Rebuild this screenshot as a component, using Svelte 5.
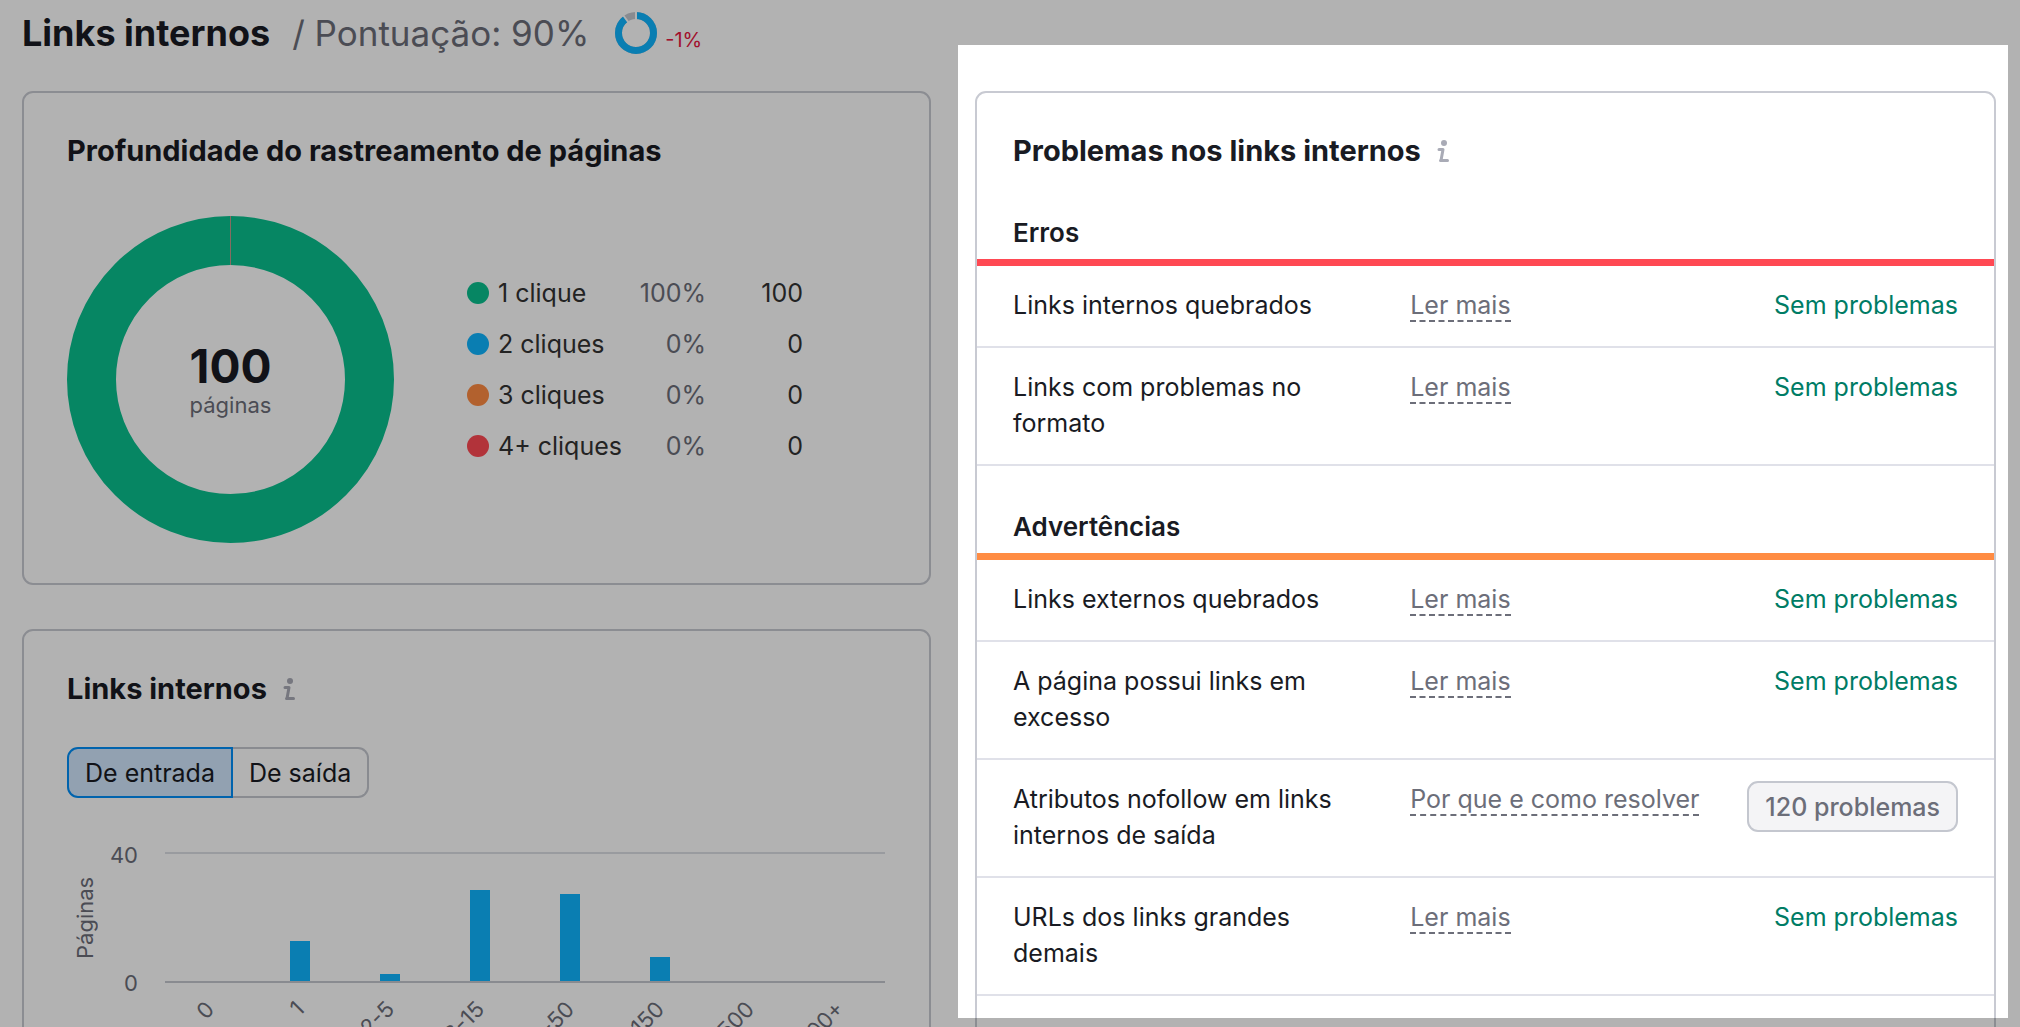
<script>
  let direction = "in";

  const legend = [
    { label: "1 clique", percent: "100%", pages: 100, type: "green" },
    { label: "2 cliques", percent: "0%", pages: 0, type: "blue" },
    { label: "3 cliques", percent: "0%", pages: 0, type: "orange" },
    { label: "4+ cliques", percent: "0%", pages: 0, type: "red" },
  ];

  // bar heights in px, the plot is 127px high
  const bars = [
    { label: "0", height: 0 },
    { label: "1", height: 40 },
    { label: "2-5", height: 7 },
    { label: "6-15", height: 91 },
    { label: "16-50", height: 87 },
    { label: "51-150", height: 24 },
    { label: "151-500", height: 0 },
    { label: "500+", height: 0 },
  ];

  const sections = [
    {
      title: "Erros",
      type: "errors",
      rows: [
        { name: "Links internos quebrados", link: "Ler mais", count: 0 },
        { name: "Links com problemas no formato", link: "Ler mais", count: 0 },
      ],
    },
    {
      title: "Advertências",
      type: "warnings",
      rows: [
        { name: "Links externos quebrados", link: "Ler mais", count: 0 },
        { name: "A página possui links em excesso", link: "Ler mais", count: 0 },
        {
          name: "Atributos nofollow em links internos de saída",
          link: "Por que e como resolver",
          count: 120,
        },
        { name: "URLs dos links grandes demais", link: "Ler mais", count: 0 },
      ],
    },
  ];
</script>

{#snippet info()}
  <svg class="info" width="12" height="22" viewBox="0 0 12 22" aria-hidden="true">
    <circle cx="7" cy="3" r="3" />
    <path d="M2 9.5h4L4 20.5M3.5 20.5h7" />
  </svg>
{/snippet}

<div class="page">
  <header>
    <h1>Links internos</h1>
    <span class="score">/ Pontuação: 90%</span>
    <svg class="ring" width="42" height="42" viewBox="0 0 42 42" aria-hidden="true">
      <circle class="ring-rest" cx="21" cy="21" r="17.5" pathLength="100" />
      <circle class="ring-value" cx="21" cy="21" r="17.5" pathLength="100" />
      <path class="ring-gap" d="M21 0v8M8 3l5.5 7.5" />
    </svg>
    <span class="diff">-1%</span>
  </header>

  <main>
    <div class="left">
      <section class="card depth">
        <h2>Profundidade do rastreamento de páginas</h2>
        <div class="depth-body">
          <div class="donut">
            <svg viewBox="0 0 327 327" aria-hidden="true">
              <circle cx="163.5" cy="163.5" r="139" />
              <path d="M163.5 0v49" />
            </svg>
            <div class="total">
              <strong>100</strong>
              <span>páginas</span>
            </div>
          </div>
          <ul>
            {#each legend as item}
              <li>
                <i class={item.type}></i>
                <span>{item.label}</span>
                <span class="percent">{item.percent}</span>
                <span class="pages">{item.pages}</span>
              </li>
            {/each}
          </ul>
        </div>
      </section>

      <section class="card links">
        <h2>Links internos {@render info()}</h2>
        <div class="switch">
          <button class:active={direction === "in"} on:click={() => (direction = "in")}>
            De entrada
          </button>
          <button class:active={direction === "out"} on:click={() => (direction = "out")}>
            De saída
          </button>
        </div>
        <div class="chart">
          <span class="axis-title">Páginas</span>
          <div class="ticks">
            <span>40</span>
            <span>0</span>
          </div>
          <div class="plot">
            <div class="bars">
              {#each bars as bar}
                <div class="bar" style="height: {bar.height}px"></div>
              {/each}
            </div>
            <div class="labels">
              {#each bars as bar}
                <span>{bar.label}</span>
              {/each}
            </div>
          </div>
        </div>
      </section>
    </div>

    <div class="right">
      <section class="card problems">
        <h2>Problemas nos links internos {@render info()}</h2>
        {#each sections as section}
          <h3 class={section.type}>{section.title}</h3>
          <table>
            <tbody>
              {#each section.rows as row}
                <tr>
                  <td class="name">{row.name}</td>
                  <td><a href="#details">{row.link}</a></td>
                  <td class="result">
                    {#if row.count}
                      <button>{row.count} problemas</button>
                    {:else}
                      Sem problemas
                    {/if}
                  </td>
                </tr>
              {/each}
            </tbody>
          </table>
        {/each}
      </section>
      <div class="spotlight"></div>
    </div>
  </main>
</div>

<style>
  :global(body) {
    margin: 0;
    background: #fff;
  }
  .page {
    box-sizing: border-box;
    display: flex;
    flex-direction: column;
    height: 100vh;
    padding: 0 24px 0 22px;
    overflow: hidden;
    font-family: Inter, "Liberation Sans", sans-serif;
    font-size: 25px;
    line-height: 36px;
    color: #191b23;
  }
  header {
    display: flex;
    align-items: center;
    flex-shrink: 0;
    height: 65px;
    margin-bottom: 26px;
  }
  h1 {
    margin: 0 22px 0 0;
    font-size: 36px;
    font-weight: 700;
    line-height: 44px;
  }
  .score {
    margin-right: 26px;
    font-size: 35px;
    line-height: 44px;
    color: #6c6e79;
  }
  .ring {
    margin-right: 8px;
    fill: none;
    stroke-width: 7;
  }
  .ring-rest {
    stroke: #c4c7cf;
  }
  .ring-value {
    stroke: #0fb5ff;
    stroke-dasharray: 90 10;
    transform: rotate(-90deg);
    transform-origin: center;
  }
  .ring-gap {
    stroke: #fff;
    stroke-width: 2;
  }
  .diff {
    padding-top: 14px;
    font-size: 20px;
    line-height: 24px;
    color: #e8173f;
  }

  main {
    display: grid;
    grid-template-columns: 909fr 1021fr;
    gap: 44px;
  }
  .left {
    display: flex;
    flex-direction: column;
    gap: 44px;
  }
  .right {
    position: relative;
    display: flex;
  }
  .spotlight {
    position: absolute;
    top: -46px;
    left: -17px;
    right: -12px;
    height: calc(100vh - 54px);
    box-shadow: 0 0 0 2000px rgba(0, 0, 0, 0.3);
    pointer-events: none;
  }
  .card {
    box-sizing: border-box;
    border: 2px solid #c8cad2;
    border-radius: 11px;
    padding: 40px 44px 40px 43px;
  }
  h2 {
    display: flex;
    align-items: center;
    gap: 16px;
    margin: 0;
    font-size: 29px;
    font-weight: 700;
  }
  .info {
    fill: #a9abb6;
  }
  .info path {
    fill: none;
    stroke: #a9abb6;
    stroke-width: 3;
    stroke-linecap: round;
    stroke-linejoin: round;
  }

  .depth-body {
    display: flex;
    align-items: center;
    gap: 73px;
    margin-top: 47px;
  }
  .donut {
    display: grid;
    width: 327px;
    height: 327px;
  }
  .donut svg,
  .total {
    grid-area: 1 / 1;
  }
  .donut circle {
    fill: none;
    stroke: #0ac08f;
    stroke-width: 49;
  }
  .donut path {
    stroke: #c09a8c;
    stroke-width: 1;
  }
  .total {
    display: flex;
    flex-direction: column;
    align-items: center;
    justify-content: center;
    padding-top: 8px;
  }
  .total strong {
    font-size: 46px;
    font-weight: 700;
    line-height: 42px;
  }
  .total span {
    font-size: 22px;
    color: #6c6e79;
  }
  ul {
    margin: 0;
    padding: 0 0 20px;
    list-style: none;
  }
  li {
    display: grid;
    grid-template-columns: 31px 130px 78px 97px;
    align-items: center;
    height: 51px;
    color: #333;
  }
  i {
    width: 22px;
    height: 22px;
    border-radius: 50%;
  }
  .green {
    background: #0ac08f;
  }
  .blue {
    background: #0fb5ff;
  }
  .orange {
    background: #ff8c43;
  }
  .red {
    background: #ff4953;
  }
  .percent,
  .pages {
    text-align: right;
  }
  .percent {
    color: #6c6e79;
  }

  .links {
    flex: 1;
  }
  button {
    height: 51px;
    padding: 0 16px;
    border: 2px solid #c4c7cf;
    background: none;
    font: inherit;
    color: inherit;
  }
  .switch {
    display: flex;
    margin-top: 40px;
  }
  .switch button:first-child {
    border-radius: 11px 0 0 11px;
  }
  .switch button:last-child {
    border-left: 0;
    border-radius: 0 11px 11px 0;
  }
  .switch .active {
    border-color: #008ff8;
    background: #d1e7fe;
  }
  .chart {
    display: grid;
    grid-template-columns: 36px 35px 1fr;
    margin-top: 54px;
    font-size: 22px;
    line-height: 24px;
    color: #6c6e79;
  }
  .axis-title {
    height: 131px;
    line-height: 36px;
    text-align: center;
    writing-mode: vertical-rl;
    transform: rotate(180deg);
  }
  .ticks {
    display: flex;
    flex-direction: column;
    justify-content: space-between;
    height: 152px;
    margin-top: -9px;
    text-align: right;
  }
  .plot {
    margin-left: 27px;
  }
  .bars {
    display: grid;
    grid-template-columns: repeat(8, 1fr);
    align-items: end;
    justify-items: center;
    height: 127px;
    border-top: 2px solid #dcdee4;
    border-bottom: 2px solid #c4c7cf;
  }
  .bar {
    width: 20px;
    background: #0fb5ff;
  }
  .labels {
    display: grid;
    grid-template-columns: repeat(8, 1fr);
    height: 80px;
    padding-top: 10px;
  }
  .labels span {
    width: 50%;
    height: 24px;
    display: flex;
    justify-content: flex-end;
    white-space: nowrap;
    transform: rotate(-45deg);
    transform-origin: right center;
  }

  .problems {
    width: 100%;
    padding: 40px 0;
  }
  .problems h2 {
    margin-bottom: 3px;
    padding: 0 36px;
  }
  h3 {
    margin: 0;
    padding: 43px 36px 8px;
    border-bottom: 7px solid;
    font-size: 26px;
    font-weight: 600;
  }
  .errors {
    border-color: #ff4953;
  }
  .warnings {
    border-color: #ff8c43;
  }
  table {
    width: 100%;
    border-spacing: 0;
  }
  td {
    padding: 21px 0 23px;
    border-bottom: 2px solid #e0e1e9;
    vertical-align: top;
  }
  .name {
    box-sizing: border-box;
    width: 42.6%;
    padding-left: 36px;
    padding-right: 60px;
  }
  a {
    border-bottom: 2px dashed #6c6e79;
    color: #6c6e79;
    text-decoration: none;
  }
  .result {
    padding-right: 36px;
    text-align: right;
    color: #007c65;
  }
  .result button {
    display: block;
    margin: 0 0 -15px auto;
    border-radius: 11px;
    background: #f4f4f6;
    font-weight: 500;
    color: #6c6e79;
  }
</style>
